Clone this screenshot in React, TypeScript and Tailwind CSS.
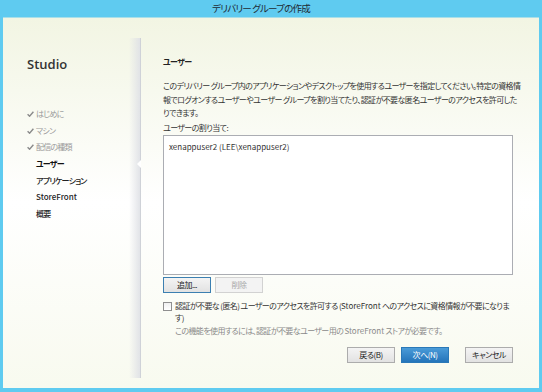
import React from "react";

const jp = '"Noto Sans CJK JP", "Noto Sans", sans-serif';

const steps = [
  { label: "はじめに", done: true },
  { label: "マシン", done: true },
  { label: "配信の種類", done: true },
  { label: "ユーザー", current: true },
  { label: "アプリケーション" },
  { label: "StoreFront", latin: true },
  { label: "概要" },
];

function Check() {
  return (
    <svg width="7" height="6" viewBox="0 0 7 6">
      <path d="M0.6 3.2 L2.6 5.2 L6.4 0.8" fill="none" stroke="#8a8a8a" strokeWidth="1.4" />
    </svg>
  );
}

function En({ children }: { children: React.ReactNode }) {
  return <span className="tracking-normal">{children}</span>;
}

function Btn({
  children,
  variant = "normal",
  className = "",
}: {
  children: React.ReactNode;
  variant?: "normal" | "focus" | "disabled" | "primary";
  className?: string;
}) {
  const styles = {
    normal: "border-[#acacac] bg-gradient-to-b from-[#f4f4f4] to-[#e2e2e2] text-[#222]",
    focus: "border-[#3c7fb1] bg-gradient-to-b from-[#f4f4f4] to-[#e2e2e2] text-[#222]",
    disabled: "border-[#d2d2d2] bg-[#f3f3f3] text-[#a8a8a8]",
    primary: "border-[#2a78b8] bg-gradient-to-b from-[#4a9bd8] to-[#2474ba] text-white",
  }[variant];
  return (
    <div
      className={`flex h-[16px] w-[48px] shrink-0 items-center justify-center border text-[8px] tracking-[-0.5px] ${styles} ${className}`}
    >
      {children}
    </div>
  );
}

export default function App() {
  return (
    <div
      className="flex h-[392px] w-[542px] flex-col overflow-hidden bg-[#5fcbf0]"
      style={{ fontFamily: jp, fontFeatureSettings: '"palt"' }}
    >
      <div className="flex h-[17px] items-center justify-center pr-[20px] text-[9.5px] tracking-[-0.8px] text-[#1e2a33]">
        デリバリー グループの作成
      </div>
      <div className="mx-[3px] mb-[4px] flex min-h-0 flex-1 border-t border-[#a9dfe9] bg-gradient-to-b from-[#f2f5e3] via-white to-[#f8faef]">
        {/* sidebar */}
        <div className="relative w-[138px] shrink-0">
          <div className="absolute right-0 top-[20px] bottom-[10px] w-[12px] bg-gradient-to-r from-transparent to-[#dfe1e6]" />
          <div className="absolute right-0 top-[20px] bottom-[10px] w-px bg-[#cfd2d8]" />
          <div className="absolute right-0 top-[142px] h-0 w-0 border-y-[4px] border-r-[4px] border-y-transparent border-r-white" />
          <div className="relative pl-[24px] pt-[37px]">
            <div
              className="text-[13px] font-semibold leading-[18px] text-[#333]"
              style={{ fontFamily: '"Open Sans", sans-serif' }}
            >
              Studio
            </div>
            <div className="mt-[33px] flex flex-col">
              {steps.map((s) => (
                <div key={s.label} className="flex h-[16.6px] items-center">
                  <div className="flex w-[9px] justify-start">{s.done && <Check />}</div>
                  <span
                    className={`text-[8px] ${s.latin ? "text-[8.5px] tracking-normal" : "tracking-[-0.8px]"} ${
                      s.done ? "text-[#9a9a9a]" : s.current ? "font-bold text-[#111]" : "font-medium text-[#222]"
                    }`}
                  >
                    {s.label}
                  </span>
                </div>
              ))}
            </div>
          </div>
        </div>
        {/* main */}
        <div className="flex min-w-0 flex-1 flex-col pl-[22px] pr-[26px] pt-[38px] text-[8px] tracking-[-0.6px] text-[#333]">
          <div className="font-bold leading-[12px] text-[#222]">ユーザー</div>
          <p className="mt-[11px] whitespace-nowrap leading-[13.5px]">
            このデリバリー グループ内のアプリケーションやデスクトップを使用するユーザーを指定してください。特定の資格情
            <br />
            報でログオンするユーザーやユーザー グループを割り当てたり、認証が不要な匿名ユーザーのアクセスを許可した
            <br />
            りできます。
          </p>
          <div className="mt-[2px] leading-[12px]">ユーザーの割り当て:</div>
          <div className="mt-[1px] h-[140px] border border-[#abadb3] bg-white px-[5px] pt-[5px] leading-[11px] text-[#333]">
            <En>xenappuser2 (LEE\xenappuser2)</En>
          </div>
          <div className="mt-[2px] flex gap-[4px]">
            <Btn variant="focus">追加...</Btn>
            <Btn variant="disabled">削除</Btn>
          </div>
          <div className="mt-[7px] flex leading-[12.5px]">
            <div className="mt-[2px] h-[9px] w-[9px] shrink-0 border border-[#8f8f8f] bg-gradient-to-b from-[#f0f0f0] to-white" />
            <div className="ml-[3px] whitespace-nowrap">
              <div>
                認証が不要な (匿名) ユーザーのアクセスを許可する (<En>StoreFront</En> へのアクセスに資格情報が不要になりま
              </div>
              <div>す)</div>
              <div className="text-[#8a8a8a]">
                この機能を使用するには、認証が不要なユーザー用の <En>StoreFront</En> ストアが必要です。
              </div>
            </div>
          </div>
          <div className="mt-[10px] flex justify-end">
            <Btn>戻る(B)</Btn>
            <Btn variant="primary" className="ml-[6px]">
              次へ(N)
            </Btn>
            <Btn className="ml-[16px]">キャンセル</Btn>
          </div>
        </div>
      </div>
    </div>
  );
}
